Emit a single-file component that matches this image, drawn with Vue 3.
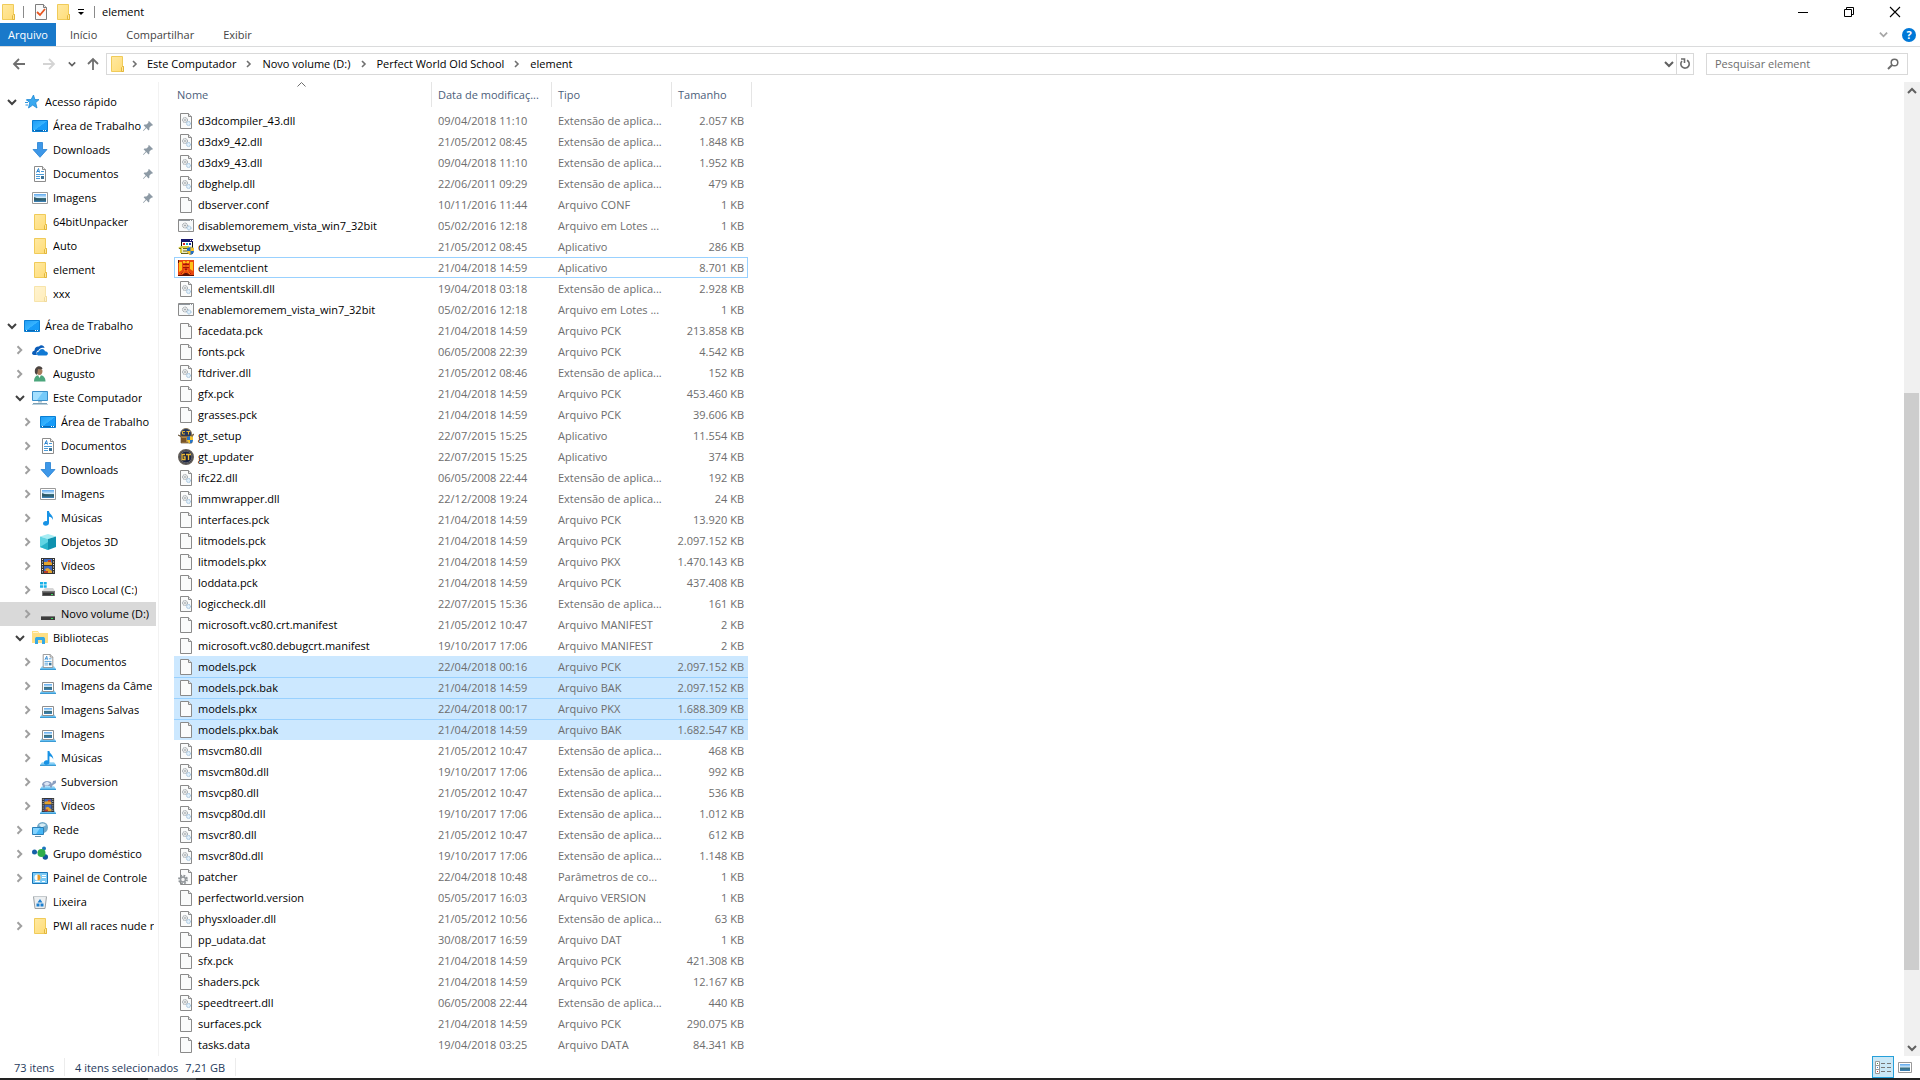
<template>
  <svg class="sprite" aria-hidden="true">
    <defs>
      <linearGradient id="g-screen" x1="0" y1="0" x2="1" y2="1">
        <stop offset="0" stop-color="#1f9bf5" />
        <stop offset=".5" stop-color="#36b4ff" />
        <stop offset=".52" stop-color="#189bf8" />
        <stop offset="1" stop-color="#149cf7" />
      </linearGradient>
      <linearGradient id="g-folder" x1="0" y1="0" x2="1" y2="1">
        <stop offset="0" stop-color="#ffe9a2" />
        <stop offset="1" stop-color="#ffdc76" />
      </linearGradient>
      <linearGradient id="g-photo" x1="0" y1="0" x2="0" y2="1">
        <stop offset="0" stop-color="#5aa7ee" />
        <stop offset=".45" stop-color="#d5ecfb" />
        <stop offset=".55" stop-color="#3d6f79" />
        <stop offset="1" stop-color="#3b82ba" />
      </linearGradient>
      <linearGradient id="g-base" x1="0" y1="0" x2="0" y2="1">
        <stop offset="0" stop-color="#c2e8fb" />
        <stop offset="1" stop-color="#53b6ee" />
      </linearGradient>
    </defs>

    <symbol id="i-folder" viewBox="0 0 16 16">
      <path d="M2.5.5h11v10h1v5h-12z" fill="url(#g-folder)" stroke="#f0cb59" />
      <path d="M12.5 15.500v-4l1-1h1v5z" fill="#ffe79b" stroke="#e3b73c" />
    </symbol>
    <symbol id="i-folder-faded" viewBox="0 0 16 16">
      <use href="#i-folder" opacity=".5" />
    </symbol>
    <symbol id="i-star" viewBox="0 0 16 16">
      <path d="M9.500 1l1.400 4.600H15l-3.300 3.100L13 14l-4.300-2.900L4.500 14l1.200-5.200L2.500 5.600h4.600z" fill="#3aa9f0" stroke="#1c86d3" stroke-width=".8" />
      <path d="M1 8.500h3M1.500 11h2.500M2.500 6.500h2" stroke="#2e95dd" />
    </symbol>
    <symbol id="i-desktop" viewBox="0 0 16 16">
      <path d="M.5 2.500h15v11H.5z" fill="url(#g-screen)" stroke="#0a7fd4" />
      <path d="M1 12.500h14" stroke="#0868b5" />
      <path d="M2 12.500h1M11 12.500h1M13 12.500h1" stroke="#fff" />
    </symbol>
    <symbol id="i-down" viewBox="0 0 16 16">
      <path d="M5.500.5h5v7h4.500L8 15.300 1 7.500h4.500z" fill="#3d97e8" stroke="#2480d2" stroke-width=".8" />
    </symbol>
    <symbol id="i-doc" viewBox="0 0 16 16">
      <path d="M2.500.5h8l3 3v12h-11z" fill="#fff" stroke="#8c8c8c" />
      <path d="M10.500.5v3h3" fill="#eee" stroke="#8c8c8c" />
      <path d="M4.500 6.500L6.500 2.500L7.500 6.500M5 5.500h2" fill="none" stroke="#2e86cf" />
      <path d="M9 5.500h3M4 8.500h8M4 10.500h4M4 12.500h4" stroke="#4b9bd8" />
      <path d="M9 10h3v3H9z" fill="#3c7396" />
    </symbol>
    <symbol id="i-image" viewBox="0 0 16 16">
      <path d="M.5 2.500h15v11H.5z" fill="#fff" stroke="#9a9a9a" />
      <path d="M2 4h12v8H2z" fill="url(#g-photo)" />
      <path d="M2 7l4 1.500 5 1 3-.5v1.500H2z" fill="#2f5968" />
    </symbol>
    <symbol id="i-cloud" viewBox="0 0 16 16">
      <path d="M0 11.500a3 3 0 0 1 2.500-3C2.500 5.500 5 4 7 4.500 8.500 2.500 12 3 12.500 6 9 5 7 7 6.500 8.500 4.500 8.500 4 11 5 13H2.500A2.500 2.500 0 0 1 0 11.500z" fill="#0a5cb8" />
      <path d="M6 13.500C4 12.500 4.500 9.500 7 9.500 7.500 6.500 12 6 13 9.200c3 0 4 3.300 1.500 4.300z" fill="#1079d4" />
    </symbol>
    <symbol id="i-user" viewBox="0 0 16 16">
      <path d="M2 15.500C2 11 4.500 9 7.500 9s6 2 6 6.500z" fill="#4ba67c" />
      <path d="M6 9l1.500 3L9 9z" fill="#fff" />
      <path d="M4 5c0-3 6.500-3 6.500 0 0 2-1 4-3 4S4 7 4 5z" fill="#a67b5c" />
      <path d="M3 7C1.500-.5 10-1.500 10.500 3L9 3.500 6 3l-.5 3.500L4.500 9z" fill="#4c4440" />
    </symbol>
    <symbol id="i-pc" viewBox="0 0 16 16">
      <path d="M.5 1.500h15v9H.5z" fill="#75cafa" stroke="#3b8fc9" />
      <path d="M1 2h10L5 10H1z" fill="#a4e0ff" />
      <path d="M6 11h4v1.500H6z" fill="#a9c2d0" />
      <path d="M1 13.500h14" stroke="#7a9eb4" />
      <path d="M0 14.500h16" stroke="#b9cfdb" />
    </symbol>
    <symbol id="i-music" viewBox="0 0 16 16">
      <path d="M7 1h2c0 3 4.500 4 4 9-.5-2-2-3-4-3.300V13c0 3.500-6 3.500-6 .5 0-2 2.200-3 4-2.300z" fill="#1792e5" />
    </symbol>
    <symbol id="i-cube" viewBox="0 0 16 16">
      <path d="M0 2.500L8 0l8 2.500L8 5z" fill="#a6edf4" />
      <path d="M0 2.500L8 5v11L0 13z" fill="#62d5e3" />
      <path d="M16 2.500L8 5v11l8-3z" fill="#0e91ae" />
      <path d="M0 13l8-5v8z" fill="#29b3c9" />
    </symbol>
    <symbol id="i-film" viewBox="0 0 16 16">
      <path d="M1 0h14v16H1z" fill="#353535" />
      <path d="M2.500 1v14M13.500 1v14" stroke="#eee" stroke-dasharray="1 1.500" />
      <path d="M4 1h8v6H4zM4 8h8v7H4z" fill="#3a68c4" />
      <path d="M4 4h3l2-2 3 3v2H4zM5 11l3-1 4 3v2H7z" fill="#e5a42c" />
      <path d="M8 2h3v2H8zM4 13h4v2H4z" fill="#b93c2c" />
    </symbol>
    <symbol id="i-drive" viewBox="0 0 16 16">
      <path d="M3 6h10l2 4H1z" fill="#dcdcdc" />
      <path d="M1 10h14v4H1z" fill="#3d3d3d" />
      <path d="M1 10.500h14" stroke="#777" />
      <path d="M11 12.500h2" stroke="#38d858" />
    </symbol>
    <symbol id="i-system-drive" viewBox="0 0 16 16">
      <path d="M5 6h8l2 3H2z" fill="#d6d6d6" />
      <path d="M2 9h13v5H2z" fill="#777" />
      <path d="M3 10.500h11v3H3z" fill="#373737" />
      <path d="M11 12.500h2" stroke="#3de061" />
      <path d="M0 0h3v2.500H0zM3.700 0h3v2.500h-3zM0 3.200h3v2.500H0zM3.700 3.200h3v2.500h-3z" fill="#19b1e8" />
    </symbol>
    <symbol id="i-library" viewBox="0 0 16 16">
      <path d="M0 1h6l1 2h9v10H0z" fill="#ffdf84" />
      <path d="M1 2.500h5" stroke="#fff4cf" />
      <path d="M3 14V9c0-1.500 1-2 2-2h6c1 0 2 .5 2 2v5h-3v-4H6v4z" fill="#35a8e4" />
    </symbol>
    <symbol id="i-base" viewBox="0 0 16 16">
      <path d="M2 12h12l2 3H0z" fill="url(#g-base)" />
      <path d="M0 15.500h16" stroke="#3c9bd4" />
    </symbol>
    <symbol id="i-lib-doc" viewBox="0 0 16 16">
      <use href="#i-base" />
      <use href="#i-doc" x="1" y="0" width="14" height="14" />
    </symbol>
    <symbol id="i-lib-image" viewBox="0 0 16 16">
      <use href="#i-base" />
      <path d="M2.500 4.500h11v9h-11z" fill="#fff" stroke="#8f8f8f" />
      <path d="M4 6h8v6H4z" fill="url(#g-photo)" />
    </symbol>
    <symbol id="i-lib-music" viewBox="0 0 16 16">
      <use href="#i-base" />
      <use href="#i-music" x="1" y="0" width="15" height="15" />
    </symbol>
    <symbol id="i-lib-svn" viewBox="0 0 16 16">
      <use href="#i-base" />
      <path d="M2 11c0-4 8-6 10-1l1-3 3-.5V9l-3 2-1 1v1.500h-2V12H5v1.500H3V12z" fill="#8b9fc0" />
      <path d="M4 9.500l3-2 3 2-2 2H5z" fill="#dce5f3" />
    </symbol>
    <symbol id="i-lib-film" viewBox="0 0 16 16">
      <use href="#i-base" />
      <use href="#i-film" x="1" y="0" width="14" height="14" />
    </symbol>
    <symbol id="i-network" viewBox="0 0 16 16">
      <circle cx="10.500" cy="5.500" r="5.500" fill="#72a9c9" />
      <path d="M7 3c2-2 5-2 7 0-2 2-3 1-4 3z" fill="#d5ebf4" />
      <path d="M.5 5.500h11v7H.5z" fill="#44b6f6" stroke="#2a7fb8" />
      <path d="M1 6h7l-4 6H1z" fill="#83d3ff" />
      <path d="M3 14.500h6" stroke="#6f93a8" />
    </symbol>
    <symbol id="i-homegroup" viewBox="0 0 16 16">
      <path d="M3 6l7 1 2-4M10 8l3 4" stroke="#9fc5dd" fill="none" />
      <circle cx="2.500" cy="6" r="2.500" fill="#1560a8" />
      <circle cx="12" cy="2.500" r="2" fill="#1b76be" />
      <circle cx="13.300" cy="11" r="2.700" fill="#12579c" />
      <circle cx="9.500" cy="7" r="4" fill="#2fae4b" />
    </symbol>
    <symbol id="i-control" viewBox="0 0 16 16">
      <path d="M.5 2.500h15v11H.5z" fill="#7ccaf5" stroke="#1a77b9" />
      <circle cx="5.500" cy="7.500" r="3" fill="#fff" />
      <path d="M5.500 7.500v-3a3 3 0 0 1 0 6z" fill="#e79a2a" />
      <path d="M10 5.500h4M10 7.500h4M3 11.500h5M10 11.500h3" stroke="#fff" />
    </symbol>
    <symbol id="i-bin" viewBox="0 0 16 16">
      <path d="M1.500 2.500h13l-1.500 12H3z" fill="#eceff1" stroke="#9a9fa3" />
      <path d="M1 2.500h14" stroke="#c5cacd" />
      <path d="M8 5l2.500 3.500h-5zM4.500 9.500h3v3h-3zM8.500 9.500h3v3h-3z" fill="#1b7fd0" />
    </symbol>

    <symbol id="i-file" viewBox="0 0 16 16">
      <path d="M2.500.5h8l3 3v12h-11z" fill="#fafbfb" stroke="#8a8a8a" />
      <path d="M10.500.5v3h3" fill="#e6e6e6" stroke="#8a8a8a" />
    </symbol>
    <symbol id="i-dll" viewBox="0 0 16 16">
      <use href="#i-file" />
      <circle cx="7" cy="7" r="2.500" fill="#e7e9ea" stroke="#8d949a" stroke-dasharray="1 .6" />
      <circle cx="7" cy="7" r=".8" fill="#8d949a" />
      <circle cx="10.500" cy="10.500" r="2" fill="#e0effa" stroke="#8fb6d6" stroke-dasharray="1 .5" />
    </symbol>
    <symbol id="i-bat" viewBox="0 0 16 16">
      <path d="M.5 1.500h15v12H.5z" fill="#f7f9fa" stroke="#8a8a8a" />
      <path d="M1 2.500h14" stroke="#8f969d" />
      <path d="M12 2.500h1M14 2.500h1" stroke="#fff" />
      <circle cx="7" cy="7.500" r="2.500" fill="#e7e9ea" stroke="#8d949a" stroke-dasharray="1 .6" />
      <circle cx="7" cy="7.500" r=".8" fill="#8d949a" />
      <circle cx="11" cy="10" r="2" fill="#e0effa" stroke="#8fb6d6" stroke-dasharray="1 .5" />
    </symbol>
    <symbol id="i-dx" viewBox="0 0 16 16">
      <path d="M3.500.5h11v14h-11z" fill="#e9ebc8" stroke="#111" />
      <path d="M3 0h12v3H3z" fill="#16166d" />
      <path d="M12 1h1v1h-1zM14 1h1v1h-1z" fill="#fff" />
      <path d="M4 3h10v4H4z" fill="#fff" />
      <path d="M5 4h2v2H5z" fill="#d62222" />
      <path d="M8 4h2v2H8z" fill="#19a4c4" />
      <path d="M11 4h2v2h-2z" fill="#1937b0" />
      <path d="M0 9l3-2h8v2H4v5H2v-4z" fill="#d8cb3d" />
      <path d="M1 9.500h2M5 9.500h5M5 12h4M4 14.500h6" stroke="#6b6718" />
      <path d="M9 9l3.500-1L16 9v3c0 2-2 3.500-3.500 4C11 15.500 9 14 9 12z" fill="#256fc2" />
      <path d="M12.500 8L16 9v3h-3.500zM9 12h3.500v4C11 15.500 9 14 9 12z" fill="#f5c32c" />
    </symbol>
    <symbol id="i-pw" viewBox="0 0 16 16">
      <path d="M0 0h16v16H0z" fill="#e8490f" />
      <path d="M1 2h3v8l-3 2zM12 2h3v9l-3-2zM5 1h2l1 2 1-2h2v2H5z" fill="#ffc21a" />
      <path d="M5 4.500h6M5 7.500h6M8 3v6M8 9l-5 5M8 9l5 5" stroke="#a31206" fill="none" />
      <path d="M5 6h6M7 10l-3 4M9 10l3 4" stroke="#ff8b12" fill="none" />
      <path d="M0 15h4l3-2h2l3 2h4v1H0zM0 0h1v3H0z" fill="#5d1405" />
    </symbol>
    <symbol id="i-gt-setup" viewBox="0 0 16 16">
      <circle cx="8" cy="6" r="5.500" fill="#23355f" stroke="#8b7b5a" />
      <path d="M7 3.500H4.500v2.500H7M8.500 3.500H12M10.500 3.500v3" stroke="#e6b32e" fill="none" />
      <path d="M0 7l3 1h9l4-2-2 3v6H3V9z" fill="#b18448" stroke="#4e3a1e" stroke-width=".6" />
      <path d="M3 10h5v4H3z" fill="#76542a" />
      <path d="M9 9l3-1 3 1v3c0 2-1.500 3-3 3.500C10.500 15 9 14 9 12z" fill="#2474c9" />
      <path d="M12 8l3 1v3h-3zM9 12h3v3.500C10.500 15 9 14 9 12z" fill="#f5c32c" />
    </symbol>
    <symbol id="i-gt" viewBox="0 0 16 16">
      <circle cx="8" cy="8" r="7.200" fill="#1b2543" stroke="#625d57" stroke-width="1.600" />
      <circle cx="8" cy="8" r="5.800" fill="none" stroke="#a29a88" stroke-width=".5" />
      <path d="M7 5.500H4v5h3V8H5.500M8 5.500h5M10.500 5.500v5.500" stroke="#eebb33" stroke-width="1.300" fill="none" />
    </symbol>
    <symbol id="i-config" viewBox="0 0 16 16">
      <use href="#i-file" />
      <circle cx="5" cy="10.500" r="4" fill="none" stroke="#8f9498" stroke-width="1.800" stroke-dasharray="1.800 1.340" />
      <circle cx="5" cy="10.500" r="2.500" fill="#f5f5f5" stroke="#92979b" stroke-width="1.500" />
    </symbol>

    <symbol id="i-check" viewBox="0 0 16 16">
      <path d="M2.500.5h8l3 3v12h-11z" fill="#fafafa" stroke="#7d7d7d" />
      <path d="M10.500.5v3h3" fill="#e6e6e6" stroke="#7d7d7d" />
      <path d="M4 8l3 3 5-6" fill="none" stroke="#e8541e" stroke-width="1.800" />
    </symbol>
    <symbol id="i-pin" viewBox="0 0 10 10">
      <path d="M6 0l4 4-1 .8-.8-.1-1.900 2 .1 1.800-.8.900-2.300-2.300L.5 10 0 9.500l2.700-3L.6 4.300l.9-.8 1.900.1 2-1.900L5.200.8z" fill="#8d9aa5" />
    </symbol>
    <symbol id="i-right" viewBox="0 0 8 8">
      <path d="M2 1L5 4 2 7" fill="none" stroke="currentColor" stroke-width="1.600" />
    </symbol>
    <symbol id="i-chevron" viewBox="0 0 10 10">
      <path d="M1 3l4 4 4-4" fill="none" stroke="currentColor" stroke-width="2" />
    </symbol>
    <symbol id="i-arrow" viewBox="0 0 14 14">
      <path d="M13 7H2M7 2L2 7l5 5" fill="none" stroke="currentColor" stroke-width="1.800" />
    </symbol>
  </svg>

  <div class="window">
    <header class="titlebar">
      <svg class="icon"><use href="#i-folder" /></svg>
      <span class="bar"></span>
      <button class="quick" aria-label="Propriedades"><svg class="icon"><use href="#i-check" /></svg></button>
      <button class="quick" aria-label="Nova pasta"><svg class="icon"><use href="#i-folder" /></svg></button>
      <button class="customize" aria-label="Personalizar">
        <svg width="8" height="8" viewBox="0 0 8 8"><path d="M1 1.500h6" stroke="#000" /><path d="M1 4h6L4 7z" /></svg>
      </button>
      <span class="bar"></span>
      <h1>element</h1>
      <div class="controls">
        <button aria-label="Minimizar"><svg width="10" height="10"><path d="M0 5.500h10" stroke="#000" /></svg></button>
        <button aria-label="Restaurar">
          <svg width="10" height="10"><path d="M.5 2.500h7v7h-7zM2.500 2.500v-2h7v7h-2" fill="none" stroke="#000" /></svg>
        </button>
        <button aria-label="Fechar"><svg width="10" height="10"><path d="M0 0l10 10M10 0L0 10" stroke="#000" stroke-width="1.100" /></svg></button>
      </div>
    </header>

    <div class="ribbon">
      <button class="file-tab">Arquivo</button>
      <button v-for="tab in tabs" :key="tab">{{ tab }}</button>
      <div class="ribbon-end">
        <button aria-label="Expandir"><svg class="chev light"><use href="#i-chevron" /></svg></button>
        <button class="help" aria-label="Ajuda">?</button>
      </div>
    </div>

    <div class="address-row">
      <div class="history">
        <button aria-label="Voltar"><svg class="arrow"><use href="#i-arrow" /></svg></button>
        <button aria-label="Avançar"><svg class="arrow forward"><use href="#i-arrow" /></svg></button>
        <button aria-label="Recentes"><svg class="chev recent"><use href="#i-chevron" /></svg></button>
        <button aria-label="Acima"><svg class="arrow up"><use href="#i-arrow" /></svg></button>
      </div>
      <div class="address">
        <svg class="icon"><use href="#i-folder" /></svg>
        <template v-for="crumb in crumbs" :key="crumb">
          <svg class="sep"><use href="#i-right" /></svg>
          <a href="#">{{ crumb }}</a>
        </template>
        <button class="drop" aria-label="Locais anteriores"><svg class="chev"><use href="#i-chevron" /></svg></button>
        <button class="refresh" aria-label="Atualizar">
          <svg width="12" height="12" viewBox="0 0 12 12">
            <path d="M8 2.200a4.200 4.200 0 1 1-5 .8M2 1h3.500v4" fill="none" stroke="#6b6b6b" stroke-width="1.600" />
          </svg>
        </button>
      </div>
      <div class="search">
        <input type="text" placeholder="Pesquisar element" aria-label="Pesquisar element" />
        <svg width="12" height="12" viewBox="0 0 12 12">
          <circle cx="7.500" cy="4.500" r="3.300" fill="none" stroke="#6b6b6b" stroke-width="1.500" />
          <path d="M5 7L1 11" stroke="#6b6b6b" stroke-width="2" />
        </svg>
      </div>
    </div>

    <div class="body">
      <nav class="tree">
        <ul v-for="(group, g) in tree" :key="g">
          <li v-for="(node, n) in group" :key="n" :class="['level-' + node.level, { current: node.current }]">
            <button v-if="node.open !== undefined" class="toggle" :class="{ open: node.open }" :aria-label="'Expandir ' + node.label">
              <svg><use :href="node.open ? '#i-chevron' : '#i-right'" /></svg>
            </button>
            <span v-else class="toggle"></span>
            <a href="#">
              <svg class="icon"><use :href="'#i-' + node.icon" /></svg>
              <span>{{ node.label }}</span>
            </a>
            <svg v-if="node.pinned" class="pin"><use href="#i-pin" /></svg>
          </li>
        </ul>
      </nav>

      <main class="files">
        <table>
          <colgroup>
            <col class="col-name" />
            <col class="col-date" />
            <col class="col-type" />
            <col class="col-size" />
          </colgroup>
          <thead>
            <tr>
              <th>
                Nome
                <svg class="sort" width="9" height="5"><path d="M.5 4.500l4-4 4 4" fill="none" stroke="#6d6d6d" /></svg>
              </th>
              <th>Data de modificaç...</th>
              <th>Tipo</th>
              <th>Tamanho</th>
            </tr>
          </thead>
          <tbody>
            <tr v-for="file in files" :key="file.name" :class="{ selected: file.selected, focused: file.focused }">
              <td>
                <div class="name">
                  <svg class="icon"><use :href="'#i-' + file.icon" /></svg>
                  <span>{{ file.name }}</span>
                </div>
              </td>
              <td>{{ file.date }}</td>
              <td>{{ file.type }}</td>
              <td>{{ file.size }} KB</td>
            </tr>
          </tbody>
        </table>
      </main>

      <div class="scrollbar">
        <button aria-label="Rolar para cima"><svg class="chev flip"><use href="#i-chevron" /></svg></button>
        <div class="track">
          <div class="before"></div>
          <div class="thumb"></div>
          <div class="after"></div>
        </div>
        <button aria-label="Rolar para baixo"><svg class="chev"><use href="#i-chevron" /></svg></button>
      </div>
    </div>

    <footer class="status">
      <span class="count">73 itens</span>
      <span class="selection"><span>4 itens selecionados</span><span>7,21 GB</span></span>
      <div class="views">
        <button class="active" aria-label="Detalhes">
          <svg width="16" height="13" viewBox="0 0 16 13">
            <path d="M.5.500h4v12h-4zM.5 4.500h4M.5 8.500h4" fill="#fff" stroke="#999" />
            <path d="M2 2.500h1" stroke="#4a8c4a" />
            <path d="M2 6.500h1" stroke="#3b80d0" />
            <path d="M2 10.500h1" stroke="#c03030" />
            <path d="M6 2.500h4M12 2.500h4M6 6.500h4M12 6.500h4M6 10.500h4M12 10.500h4" stroke="#777" />
          </svg>
        </button>
        <button aria-label="Miniaturas">
          <svg width="14" height="11" viewBox="0 0 14 11">
            <path d="M.5.500h13v10H.5z" fill="#fff" stroke="#999" />
            <path d="M2 2h10v7H2z" fill="url(#g-photo)" />
          </svg>
        </button>
      </div>
    </footer>
    <div class="taskbar"><span></span></div>
  </div>
</template>

<script setup>
const tabs = ['Início', 'Compartilhar', 'Exibir']
const crumbs = ['Este Computador', 'Novo volume (D:)', 'Perfect World Old School', 'element']

const tree = [
  [
    { level: 0, icon: 'star', label: 'Acesso rápido', open: true },
    { level: 1, icon: 'desktop', label: 'Área de Trabalho', pinned: true },
    { level: 1, icon: 'down', label: 'Downloads', pinned: true },
    { level: 1, icon: 'doc', label: 'Documentos', pinned: true },
    { level: 1, icon: 'image', label: 'Imagens', pinned: true },
    { level: 1, icon: 'folder', label: '64bitUnpacker' },
    { level: 1, icon: 'folder', label: 'Auto' },
    { level: 1, icon: 'folder', label: 'element' },
    { level: 1, icon: 'folder-faded', label: 'xxx' },
  ],
  [
    { level: 0, icon: 'desktop', label: 'Área de Trabalho', open: true },
    { level: 1, icon: 'cloud', label: 'OneDrive', open: false },
    { level: 1, icon: 'user', label: 'Augusto', open: false },
    { level: 1, icon: 'pc', label: 'Este Computador', open: true },
    { level: 2, icon: 'desktop', label: 'Área de Trabalho', open: false },
    { level: 2, icon: 'doc', label: 'Documentos', open: false },
    { level: 2, icon: 'down', label: 'Downloads', open: false },
    { level: 2, icon: 'image', label: 'Imagens', open: false },
    { level: 2, icon: 'music', label: 'Músicas', open: false },
    { level: 2, icon: 'cube', label: 'Objetos 3D', open: false },
    { level: 2, icon: 'film', label: 'Vídeos', open: false },
    { level: 2, icon: 'system-drive', label: 'Disco Local (C:)', open: false },
    { level: 2, icon: 'drive', label: 'Novo volume (D:)', open: false, current: true },
    { level: 1, icon: 'library', label: 'Bibliotecas', open: true },
    { level: 2, icon: 'lib-doc', label: 'Documentos', open: false },
    { level: 2, icon: 'lib-image', label: 'Imagens da Câme', open: false },
    { level: 2, icon: 'lib-image', label: 'Imagens Salvas', open: false },
    { level: 2, icon: 'lib-image', label: 'Imagens', open: false },
    { level: 2, icon: 'lib-music', label: 'Músicas', open: false },
    { level: 2, icon: 'lib-svn', label: 'Subversion', open: false },
    { level: 2, icon: 'lib-film', label: 'Vídeos', open: false },
    { level: 1, icon: 'network', label: 'Rede', open: false },
    { level: 1, icon: 'homegroup', label: 'Grupo doméstico', open: false },
    { level: 1, icon: 'control', label: 'Painel de Controle', open: false },
    { level: 1, icon: 'bin', label: 'Lixeira' },
    { level: 1, icon: 'folder', label: 'PWI all races nude r', open: false },
  ],
]

const DLL = 'Extensão de aplica...'
const BAT = 'Arquivo em Lotes ...'

const files = [
  ['dll', 'd3dcompiler_43.dll', '09/04/2018 11:10', DLL, '2.057'],
  ['dll', 'd3dx9_42.dll', '21/05/2012 08:45', DLL, '1.848'],
  ['dll', 'd3dx9_43.dll', '09/04/2018 11:10', DLL, '1.952'],
  ['dll', 'dbghelp.dll', '22/06/2011 09:29', DLL, '479'],
  ['file', 'dbserver.conf', '10/11/2016 11:44', 'Arquivo CONF', '1'],
  ['bat', 'disablemoremem_vista_win7_32bit', '05/02/2016 12:18', BAT, '1'],
  ['dx', 'dxwebsetup', '21/05/2012 08:45', 'Aplicativo', '286'],
  ['pw', 'elementclient', '21/04/2018 14:59', 'Aplicativo', '8.701'],
  ['dll', 'elementskill.dll', '19/04/2018 03:18', DLL, '2.928'],
  ['bat', 'enablemoremem_vista_win7_32bit', '05/02/2016 12:18', BAT, '1'],
  ['file', 'facedata.pck', '21/04/2018 14:59', 'Arquivo PCK', '213.858'],
  ['file', 'fonts.pck', '06/05/2008 22:39', 'Arquivo PCK', '4.542'],
  ['dll', 'ftdriver.dll', '21/05/2012 08:46', DLL, '152'],
  ['file', 'gfx.pck', '21/04/2018 14:59', 'Arquivo PCK', '453.460'],
  ['file', 'grasses.pck', '21/04/2018 14:59', 'Arquivo PCK', '39.606'],
  ['gt-setup', 'gt_setup', '22/07/2015 15:25', 'Aplicativo', '11.554'],
  ['gt', 'gt_updater', '22/07/2015 15:25', 'Aplicativo', '374'],
  ['dll', 'ifc22.dll', '06/05/2008 22:44', DLL, '192'],
  ['dll', 'immwrapper.dll', '22/12/2008 19:24', DLL, '24'],
  ['file', 'interfaces.pck', '21/04/2018 14:59', 'Arquivo PCK', '13.920'],
  ['file', 'litmodels.pck', '21/04/2018 14:59', 'Arquivo PCK', '2.097.152'],
  ['file', 'litmodels.pkx', '21/04/2018 14:59', 'Arquivo PKX', '1.470.143'],
  ['file', 'loddata.pck', '21/04/2018 14:59', 'Arquivo PCK', '437.408'],
  ['dll', 'logiccheck.dll', '22/07/2015 15:36', DLL, '161'],
  ['file', 'microsoft.vc80.crt.manifest', '21/05/2012 10:47', 'Arquivo MANIFEST', '2'],
  ['file', 'microsoft.vc80.debugcrt.manifest', '19/10/2017 17:06', 'Arquivo MANIFEST', '2'],
  ['file', 'models.pck', '22/04/2018 00:16', 'Arquivo PCK', '2.097.152'],
  ['file', 'models.pck.bak', '21/04/2018 14:59', 'Arquivo BAK', '2.097.152'],
  ['file', 'models.pkx', '22/04/2018 00:17', 'Arquivo PKX', '1.688.309'],
  ['file', 'models.pkx.bak', '21/04/2018 14:59', 'Arquivo BAK', '1.682.547'],
  ['dll', 'msvcm80.dll', '21/05/2012 10:47', DLL, '468'],
  ['dll', 'msvcm80d.dll', '19/10/2017 17:06', DLL, '992'],
  ['dll', 'msvcp80.dll', '21/05/2012 10:47', DLL, '536'],
  ['dll', 'msvcp80d.dll', '19/10/2017 17:06', DLL, '1.012'],
  ['dll', 'msvcr80.dll', '21/05/2012 10:47', DLL, '612'],
  ['dll', 'msvcr80d.dll', '19/10/2017 17:06', DLL, '1.148'],
  ['config', 'patcher', '22/04/2018 10:48', 'Parâmetros de co...', '1'],
  ['file', 'perfectworld.version', '05/05/2017 16:03', 'Arquivo VERSION', '1'],
  ['dll', 'physxloader.dll', '21/05/2012 10:56', DLL, '63'],
  ['file', 'pp_udata.dat', '30/08/2017 16:59', 'Arquivo DAT', '1'],
  ['file', 'sfx.pck', '21/04/2018 14:59', 'Arquivo PCK', '421.308'],
  ['file', 'shaders.pck', '21/04/2018 14:59', 'Arquivo PCK', '12.167'],
  ['dll', 'speedtreert.dll', '06/05/2008 22:44', DLL, '440'],
  ['file', 'surfaces.pck', '21/04/2018 14:59', 'Arquivo PCK', '290.075'],
  ['file', 'tasks.data', '19/04/2018 03:25', 'Arquivo DATA', '84.341'],
].map(([icon, name, date, type, size]) => ({
  icon,
  name,
  date,
  type,
  size,
  selected: name.startsWith('models.'),
  focused: name === 'elementclient',
}))
</script>

<style>
body {
  margin: 0;
  background: #fff;
}
</style>

<style scoped>
.sprite {
  position: absolute;
  width: 0;
  height: 0;
}

.window {
  display: flex;
  flex-direction: column;
  height: 100vh;
  overflow: hidden;
  font-family: "Open Sans", "Noto Sans", sans-serif;
  font-size: 11px;
  line-height: 16px;
  color: #000;
}

button {
  display: flex;
  align-items: center;
  justify-content: center;
  padding: 0;
  border: 0;
  background: none;
  font: inherit;
  color: inherit;
}

a {
  color: inherit;
  text-decoration: none;
}

svg {
  flex: none;
  display: block;
}

.icon {
  width: 16px;
  height: 16px;
}

.chev {
  width: 10px;
  height: 10px;
  color: #606060;
}

.chev.light {
  width: 9px;
  height: 9px;
  color: #a6a6a6;
}

.chev.recent {
  width: 8px;
  height: 8px;
}

.chev.flip {
  transform: rotate(180deg);
}

/* title bar */
.titlebar {
  display: flex;
  align-items: center;
  height: 23px;
}

.bar {
  width: 1px;
  height: 12px;
  margin: 0 6px 0 7px;
  background: #8a8a8a;
}

.quick {
  width: 22px;
  height: 22px;
}

.customize {
  width: 13px;
  height: 22px;
}

.titlebar h1 {
  margin: 0;
  padding-left: 1px;
  font-size: 11px;
  font-weight: 400;
}

.controls {
  display: flex;
  margin-left: auto;
  padding-right: 2px;
}

.controls button {
  width: 46px;
  height: 20px;
}

.controls svg {
  overflow: visible;
}

/* ribbon */
.ribbon {
  display: flex;
  height: 23px;
  border-bottom: 1px solid #dadbdc;
  color: #444;
}

.ribbon > button {
  margin-right: 1px;
  padding: 0 14px;
}

.ribbon > .file-tab {
  width: 56px;
  margin-right: 0;
  padding: 0;
  background: #1979ca;
  color: #fff;
}

.ribbon-end {
  display: flex;
  align-items: center;
  gap: 14px;
  margin-left: auto;
  padding-right: 4px;
}

.help {
  width: 14px;
  height: 14px;
  border-radius: 50%;
  background: #0078d7;
  color: #fff;
  font-weight: 700;
  line-height: 14px;
}

/* address bar */
.address-row {
  display: flex;
  align-items: flex-start;
  box-sizing: border-box;
  height: 35px;
  padding: 6px 12px 0 0;
}

.history {
  display: flex;
  align-items: center;
  width: 106px;
}

.history button {
  width: 30px;
  height: 22px;
}

.history button:first-child {
  width: 34px;
  padding-left: 4px;
}

.history button:nth-child(3) {
  width: 16px;
}

.history button:nth-child(4) {
  width: 26px;
}

.arrow {
  width: 14px;
  height: 14px;
  color: #6f6f6f;
}

.arrow.forward {
  color: #d4d4d4;
  transform: rotate(180deg);
}

.arrow.up {
  transform: rotate(90deg);
}

.address {
  display: flex;
  flex: 1;
  align-items: center;
  box-sizing: border-box;
  height: 22px;
  padding-left: 2px;
  border: 1px solid #d9d9d9;
}

.sep {
  width: 8px;
  height: 8px;
  margin: 0 8px 0 6px;
  color: #707070;
}

.address a + .sep {
  margin: 0 9px;
}

.drop {
  width: 14px;
  height: 20px;
  margin-left: auto;
}

.refresh {
  width: 17px;
  height: 20px;
  border-left: 1px solid #d9d9d9;
}

.search {
  display: flex;
  align-items: center;
  box-sizing: border-box;
  width: 202px;
  height: 22px;
  margin-left: 12px;
  padding: 0 8px;
  border: 1px solid #d9d9d9;
}

.search input {
  flex: 1;
  min-width: 0;
  padding: 0;
  border: 0;
  outline: 0;
  background: none;
  font: inherit;
}

.search input::placeholder {
  color: #6d6d6d;
}

/* body */
.body {
  display: flex;
  flex: 1;
  min-height: 0;
}

.tree {
  flex: none;
  width: 158px;
  padding-top: 8px;
  border-right: 1px solid #f2f2f2;
}

.tree ul {
  margin: 0 2px 8px 0;
  padding: 0;
  list-style: none;
}

.tree li {
  display: flex;
  align-items: center;
  height: 24px;
}

.tree li.level-1 {
  padding-left: 8px;
}

.tree li.level-2 {
  padding-left: 16px;
}

.tree li.current {
  background: #d9d9d9;
}

.tree a {
  display: flex;
  flex: 1;
  align-items: center;
  gap: 5px;
  min-width: 0;
}

.tree a span {
  overflow: hidden;
  white-space: nowrap;
}

.toggle {
  flex: none;
  width: 24px;
  height: 24px;
  color: #a0a0a0;
}

.toggle svg {
  width: 10px;
  height: 10px;
}

.toggle.open {
  color: #404040;
}

.pin {
  width: 10px;
  height: 10px;
  margin: 0 3px 0 2px;
}

.files {
  flex: 1;
  min-width: 0;
  padding-left: 15px;
  overflow: hidden;
}

table {
  width: 578px;
  table-layout: fixed;
  border-spacing: 0;
  text-align: left;
}

.col-name {
  width: 258px;
}

.col-date,
.col-type {
  width: 120px;
}

.col-size {
  width: 80px;
}

th {
  position: relative;
  height: 25px;
  padding: 0 6px 0 6px;
  border-right: 1px solid #e5e5e5;
  color: #4c607a;
  font-weight: 400;
}

th:first-child {
  padding-left: 3px;
}

.sort {
  position: absolute;
  top: 0;
  left: 123px;
}

th,
td {
  overflow: hidden;
  text-overflow: ellipsis;
  white-space: nowrap;
}

tbody::before {
  content: "";
  display: block;
  height: 3px;
}

td {
  height: 21px;
  padding: 0 8px 0 6px;
  color: #6d6d6d;
}

td:first-child {
  padding-left: 4px;
  color: #000;
}

td:last-child {
  padding: 0 4px 0 0;
  border-right: 4px solid #fff;
  text-align: right;
}

.name {
  display: flex;
  align-items: center;
  gap: 4px;
}

.selected td {
  background: #cce8ff;
  background-clip: padding-box;
}

.selected + .selected td {
  box-shadow: inset 0 1px #99d1ff;
}

.focused td {
  box-shadow: inset 0 1px #99d1ff, inset 0 -1px #99d1ff;
}

.focused td:first-child {
  box-shadow: inset 0 1px #99d1ff, inset 0 -1px #99d1ff, inset 1px 0 #99d1ff;
}

.focused td:last-child {
  box-shadow: inset 0 1px #99d1ff, inset 0 -1px #99d1ff, inset -1px 0 #99d1ff;
}

.scrollbar {
  display: flex;
  flex-direction: column;
  width: 16px;
  background: #f0f0f0;
}

.scrollbar button {
  height: 17px;
}

.track {
  display: flex;
  flex: 1;
  flex-direction: column;
}

.before {
  flex: 294;
}

.thumb {
  flex: 577;
  margin-right: 1px;
  background: #cdcdcd;
}

.after {
  flex: 69;
}

/* status bar */
.status {
  display: flex;
  align-items: center;
  height: 22px;
  color: #1e395b;
}

.count,
.selection {
  padding-top: 2px;
}

.count {
  width: 50px;
  padding-left: 14px;
  border-right: 1px solid #ececec;
}

.selection {
  display: flex;
  gap: 7px;
  width: 160px;
  padding-left: 10px;
  border-right: 1px solid #ececec;
  white-space: nowrap;
}

.views {
  display: flex;
  gap: 1px;
  margin-left: auto;
  padding-right: 5px;
}

.views button {
  box-sizing: border-box;
  width: 20px;
  height: 22px;
}

.views .active {
  width: 22px;
  border: 1px solid #26a0da;
  background: #cbe8f6;
}

.taskbar {
  height: 2px;
  padding-left: 148px;
  background: #222;
}

.taskbar span {
  display: block;
  width: 48px;
  height: 2px;
  background: #4a4a4a;
}
</style>
